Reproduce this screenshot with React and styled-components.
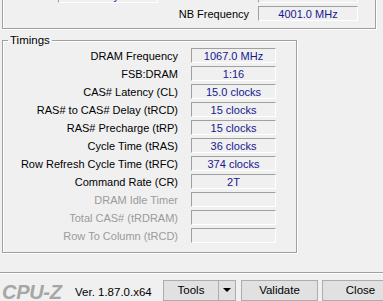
import React from 'react'
import styled, { createGlobalStyle } from 'styled-components'

const GlobalStyle = createGlobalStyle`
  html, body {
    margin: 0;
    padding: 0;
    background: #f0f0f0;
    overflow: hidden;
  }
`

const Window = styled.div`
  width: 383px;
  height: 301px;
  overflow: hidden;
  background: #f0f0f0;
  font-family: "Liberation Sans", Arial, sans-serif;
  font-size: 11px;
  color: #000;
  display: flex;
  flex-direction: column;
`

const GeneralBox = styled.div`
  flex: none;
  margin: -24px 7px 0 2px;
  padding: 11px 17px 7px 5px;
  border: 1px solid #a0a0a0;
  box-shadow: inset 1px 1px 0 #fff, 1px 1px 0 #fff;
  display: grid;
  grid-template-columns: 45px 100px 1fr 100px;
  grid-auto-rows: 15px;
  column-gap: 5px;
  row-gap: 3px;
  align-items: center;
`

const Label = styled.span`
  white-space: nowrap;
  color: ${p => (p.$disabled ? '#9b9b9b' : '#000')};
  text-align: ${p => (p.$left ? 'left' : 'right')};
  padding-right: ${p => (p.$pad ? '4px' : '0')};
  line-height: 16px;
`

const Field = styled.div`
  box-sizing: border-box;
  height: 15px;
  border: 1px solid;
  border-color: #a0a0a0 #fff #fff #a0a0a0;
  color: #17178f;
  text-align: center;
  line-height: 14px;
  white-space: nowrap;
  overflow: hidden;
`

const Timings = styled.fieldset`
  flex: none;
  margin: 4px 0 0 2px;
  width: 295px;
  box-sizing: border-box;
  padding: 1px 20px 0 0;
  border: 1px solid #a0a0a0;
  box-shadow: inset 1px 1px 0 #fff, 1px 1px 0 #fff;
  min-width: 0;
`

const TimingGrid = styled.div`
  display: grid;
  grid-template-columns: 1fr 85px;
  grid-auto-rows: 15px;
  column-gap: 13px;
  row-gap: 3px;
  align-items: center;
  margin-bottom: 9px;
`

const Legend = styled.legend`
  margin-left: 5px;
  padding: 0 2px;
  line-height: 14px;
  font-size: 11.5px;
`

const BottomBar = styled.div`
  margin-top: auto;
  flex: none;
  height: 29px;
  border-top: 1px solid #a0a0a0;
  box-shadow: inset 0 1px 0 #fff;
  display: flex;
  align-items: flex-start;
  padding: 7px 0 0 2px;
  box-sizing: border-box;
  white-space: nowrap;
`

const Logo = styled.span`
  flex: none;
  width: 61px;
  font-family: "Liberation Sans", Arial, sans-serif;
  font-weight: bold;
  font-style: italic;
  font-size: 20px;
  line-height: 20px;
  color: #a6a6a6;
  letter-spacing: -0.3px;
  margin-top: 2px;
`

const Version = styled.span`
  flex: none;
  margin: 6px 0 0 12px;
  font-size: 11.5px;
  width: 77px;
`

const Buttons = styled.div`
  display: flex;
  gap: 4px;
  margin-left: 11px;
`

const ToolsGroup = styled.div`
  flex: none;
  display: flex;
  width: 73px;
  height: 21px;
  box-sizing: border-box;
  border: 1px solid #adadad;
  background: #e1e1e1;
  margin-right: 1px;
`

const ToolsMain = styled.div`
  flex: 1;
  text-align: center;
  line-height: 19px;
  font-size: 11.5px;
`

const ToolsArrow = styled.div`
  width: 16px;
  border-left: 1px solid #adadad;
  display: flex;
  align-items: center;
  justify-content: center;

  &::after {
    content: '';
    border-left: 4px solid transparent;
    border-right: 4px solid transparent;
    border-top: 4px solid #000;
    margin-top: -2px;
  }
`

const Button = styled.div`
  flex: none;
  width: 77px;
  height: 21px;
  box-sizing: border-box;
  border: 1px solid #adadad;
  background: #e1e1e1;
  text-align: center;
  line-height: 19px;
  font-size: 11.5px;
`

const general = [
  ['Size', '16 GBytes', 'DC Mode', ''],
  ['', null, 'NB Frequency', '4001.0 MHz'],
]

const timings = [
  ['DRAM Frequency', '1067.0 MHz'],
  ['FSB:DRAM', '1:16'],
  ['CAS# Latency (CL)', '15.0 clocks'],
  ['RAS# to CAS# Delay (tRCD)', '15 clocks'],
  ['RAS# Precharge (tRP)', '15 clocks'],
  ['Cycle Time (tRAS)', '36 clocks'],
  ['Row Refresh Cycle Time (tRFC)', '374 clocks'],
  ['Command Rate (CR)', '2T'],
  ['DRAM Idle Timer', '', true],
  ['Total CAS# (tRDRAM)', '', true],
  ['Row To Column (tRCD)', '', true],
]

export default function App() {
  return (
    <Window>
      <GlobalStyle />
      <GeneralBox>
        {general.map(([l1, v1, l2, v2], i) => (
          <React.Fragment key={i}>
            <Label $left>{l1}</Label>
            {v1 === null ? <span /> : <Field>{v1}</Field>}
            <Label $pad>{l2}</Label>
            <Field>{v2}</Field>
          </React.Fragment>
        ))}
      </GeneralBox>

      <Timings>
        <Legend>Timings</Legend>
        <TimingGrid>
          {timings.map(([label, value, off]) => (
            <React.Fragment key={label}>
              <Label $disabled={off}>{label}</Label>
              <Field>{value}</Field>
            </React.Fragment>
          ))}
        </TimingGrid>
      </Timings>

      <BottomBar>
        <Logo>CPU-Z</Logo>
        <Version>Ver. 1.87.0.x64</Version>
        <Buttons>
          <ToolsGroup>
            <ToolsMain>Tools</ToolsMain>
            <ToolsArrow />
          </ToolsGroup>
          <Button>Validate</Button>
          <Button>Close</Button>
        </Buttons>
      </BottomBar>
    </Window>
  )
}
